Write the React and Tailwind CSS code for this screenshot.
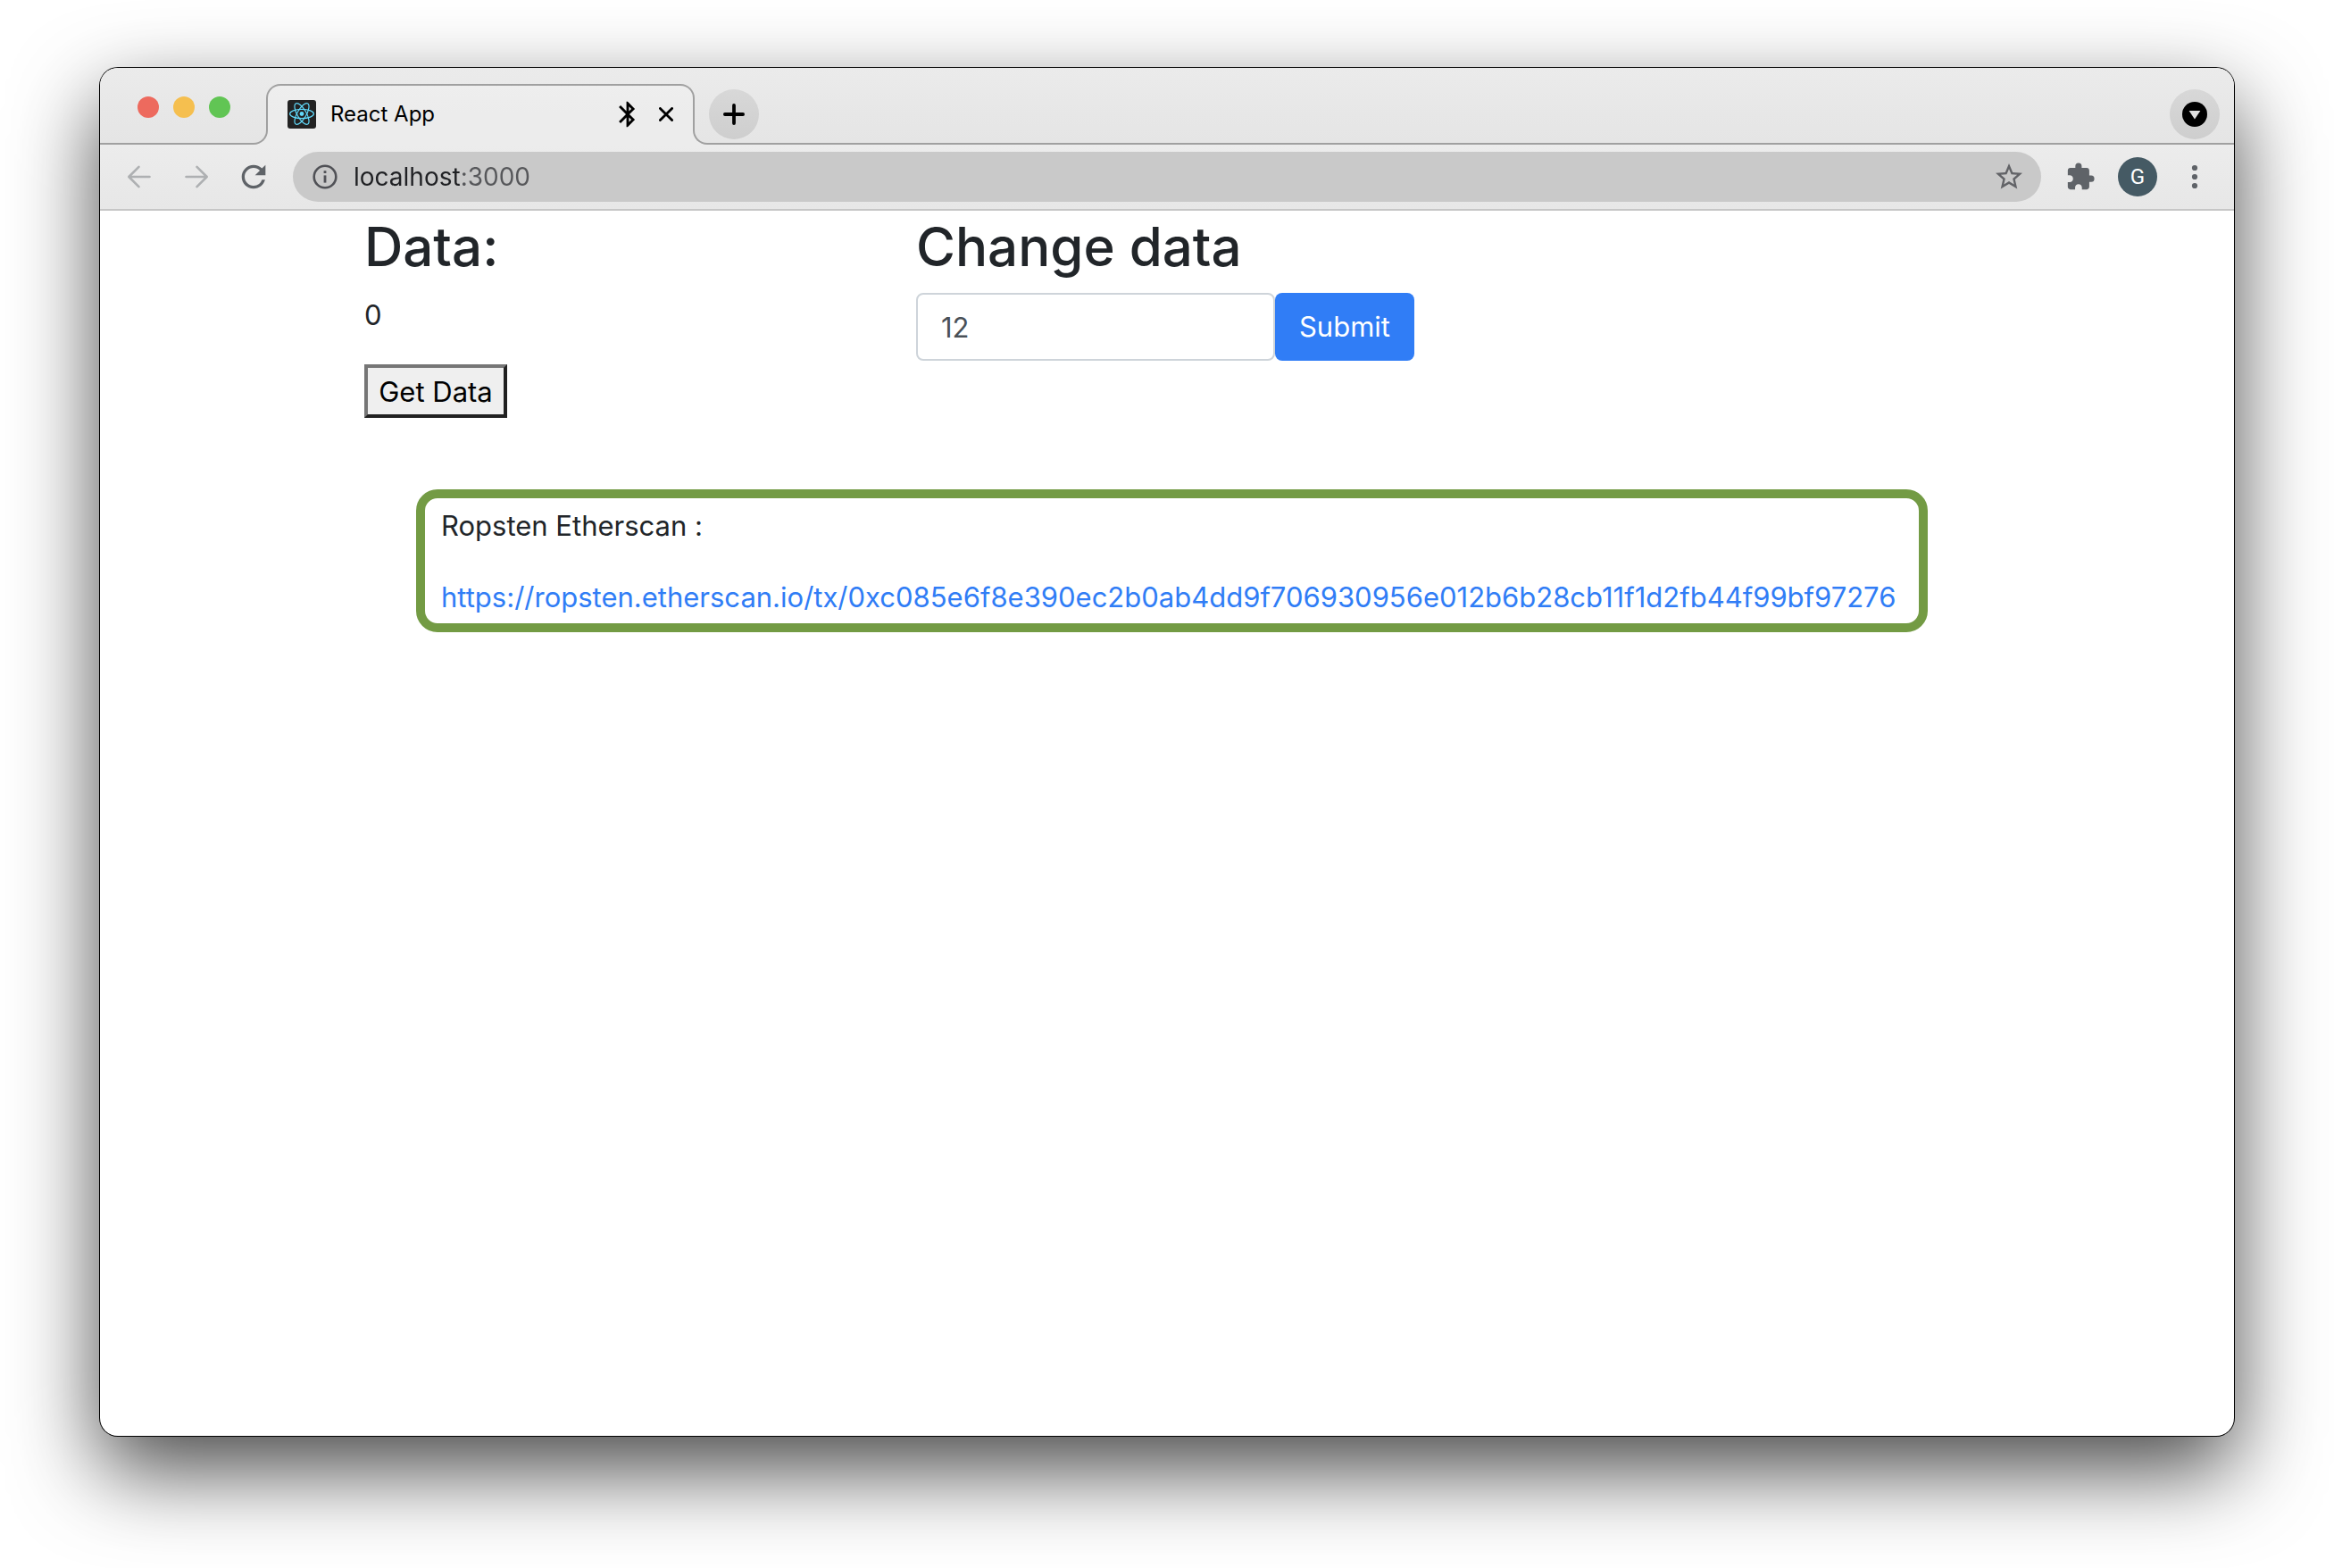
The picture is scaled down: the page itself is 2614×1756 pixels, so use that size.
import { useState } from "react";
import { MdBluetooth, MdExtension, MdRefresh, MdStarBorder } from "react-icons/md";

const TX_URL =
  "https://ropsten.etherscan.io/tx/0xc085e6f8e390ec2b0ab4dd9f706930956e012b6b28cb11f1d2fb44f99bf97276";

function ReactLogo() {
  return (
    <svg viewBox="0 0 32 32" className="size-8 shrink-0" aria-hidden="true">
      <rect width="32" height="32" rx="3" fill="#222222" />
      <g fill="none" stroke="#61dafb" strokeWidth="1.2">
        <ellipse cx="16" cy="15.5" rx="13.4" ry="5.1" />
        <ellipse cx="16" cy="15.5" rx="13.4" ry="5.1" transform="rotate(60 16 15.5)" />
        <ellipse cx="16" cy="15.5" rx="13.4" ry="5.1" transform="rotate(120 16 15.5)" />
      </g>
      <circle cx="16" cy="15.5" r="2.4" fill="#61dafb" />
    </svg>
  );
}

function Arrow({ flip }) {
  return (
    <svg
      viewBox="0 0 28 28"
      className={flip ? "size-7 rotate-180" : "size-7"}
      fill="none"
      stroke="#aeb0b2"
      strokeWidth="2.6"
      strokeLinecap="round"
      strokeLinejoin="round"
      aria-hidden="true"
    >
      <path d="M25.5 14H2.5M13.5 2.8L2.3 14l11.2 11.2" />
    </svg>
  );
}

function InfoIcon() {
  return (
    <svg viewBox="0 0 28 28" className="size-7 shrink-0" aria-hidden="true">
      <circle cx="14" cy="14" r="12.3" fill="none" stroke="#505156" strokeWidth="2.6" />
      <rect x="12.6" y="7.2" width="2.8" height="2.8" fill="#505156" />
      <rect x="12.6" y="12.4" width="2.8" height="8.2" fill="#505156" />
    </svg>
  );
}

function TabStrip() {
  return (
    <header className="grid grid-cols-[188px_476px_1fr] grid-rows-[52px_34px]">
      <div className="col-span-3 col-start-1 row-start-1 bg-linear-to-b from-[#ebebeb] to-[#e7e7e7]" />
      <div className="col-start-1 row-start-2 bg-[#ececec]">
        <div className="h-full rounded-br-[16px] border-r-2 border-b-2 border-[#a0a0a0] bg-linear-to-b from-[#e7e7e7] to-[#e5e5e5]" />
      </div>
      <div className="col-start-2 row-start-2 bg-[#ececec]" />
      <div className="col-start-3 row-start-2 bg-[#ececec]">
        <div className="h-full rounded-bl-[16px] border-b-2 border-l-2 border-[#a0a0a0] bg-linear-to-b from-[#e7e7e7] to-[#e5e5e5]" />
      </div>
      <div className="col-start-2 row-start-1 -mx-0.5 mt-[18px] rounded-t-[16px] border-x-2 border-t-2 border-[#a0a0a0] bg-linear-to-b from-[#eeeeee] to-[#ececec]" />

      <div className="col-start-1 row-span-2 row-start-1 flex gap-4 pt-8 pl-[42px]">
        <button type="button" aria-label="Close window" className="size-6 rounded-full bg-[#ed6a5e]" />
        <button type="button" aria-label="Minimize window" className="size-6 rounded-full bg-[#f5bf4f]" />
        <button type="button" aria-label="Zoom window" className="size-6 rounded-full bg-[#61c554]" />
      </div>

      <div className="col-start-2 row-span-2 row-start-1 flex items-center px-[22px] pt-[18px]">
        <ReactLogo />
        <span className="ml-4 flex-1 text-2xl text-black">React App</span>
        <MdBluetooth className="mr-[18px] size-[34px] text-black" aria-hidden="true" />
        <button type="button" aria-label="Close tab" className="size-4">
          <svg viewBox="0 0 16 16" className="size-4" stroke="#000" strokeWidth="2.8" strokeLinecap="round">
            <path d="M1.4 1.4l13.2 13.2M14.6 1.4L1.4 14.6" />
          </svg>
        </button>
      </div>

      <div className="col-start-3 row-span-2 row-start-1 flex items-center justify-between pt-[18px] pr-4 pl-[18px]">
        <button
          type="button"
          aria-label="New tab"
          className="flex size-14 items-center justify-center rounded-full bg-linear-to-b from-[#d8d8d8] to-[#cecece]"
        >
          <svg viewBox="0 0 24 24" className="size-6" stroke="#000" strokeWidth="3.8" strokeLinecap="round">
            <path d="M12 1.9v20.2M1.9 12h20.2" />
          </svg>
        </button>
        <button
          type="button"
          aria-label="Search tabs"
          className="flex size-14 items-center justify-center rounded-full bg-linear-to-b from-[#d8d8d8] to-[#cecece]"
        >
          <svg viewBox="0 0 28 28" className="size-7">
            <circle cx="14" cy="14" r="14" fill="#000" />
            <path d="M7.6 10h12.8L14 19.6z" fill="#e0e0e0" />
          </svg>
        </button>
      </div>
    </header>
  );
}

function Toolbar() {
  const [address, setAddress] = useState("localhost:3000");
  return (
    <nav className="flex h-[74px] items-center border-b-2 border-[#c6c6c6] bg-linear-to-b from-[#ececec] to-[#e7e7e7] px-3">
      <button type="button" aria-label="Back" className="flex w-16 justify-center">
        <Arrow />
      </button>
      <button type="button" aria-label="Forward" className="flex w-16 justify-center">
        <Arrow flip />
      </button>
      <button type="button" aria-label="Reload" className="flex w-16 justify-center">
        <MdRefresh className="size-10 text-[#5f6368]" />
      </button>
      <div className="mx-3 flex h-14 flex-1 items-center rounded-full bg-[#c9c9c9] pr-[18px] pl-[22px]">
        <InfoIcon />
        <input
          type="text"
          aria-label="Address"
          value={address}
          onChange={(e) => setAddress(e.target.value)}
          className="ml-[18px] min-w-0 flex-1 bg-[linear-gradient(to_right,#202124_121px,#56575a_121px)] bg-clip-text text-[28px] leading-10 text-transparent outline-none"
        />
        <button type="button" aria-label="Bookmark this page">
          <MdStarBorder className="size-9 text-[#626367]" />
        </button>
      </div>
      <button type="button" aria-label="Extensions" className="flex w-16 justify-center">
        <MdExtension className="size-[34px] text-[#5f6368]" />
      </button>
      <button type="button" aria-label="Profile" className="flex w-16 justify-center">
        <span className="flex size-11 items-center justify-center rounded-full bg-[#455a64] font-[Roboto] text-2xl text-white">
          G
        </span>
      </button>
      <button type="button" aria-label="Menu" className="flex w-16 justify-center">
        <svg viewBox="0 0 28 28" className="size-7" fill="#5f6368">
          <circle cx="14" cy="4" r="3.1" />
          <circle cx="14" cy="14" r="3.1" />
          <circle cx="14" cy="24" r="3.1" />
        </svg>
      </button>
    </nav>
  );
}

function Page() {
  const [value, setValue] = useState("12");
  return (
    <main className="mx-auto w-full max-w-[1918px] px-15 text-[31px] leading-[50px] text-[#212529]">
      <div className="flex">
        <section className="w-[618px] shrink-0">
          <h2 className="mb-3 text-[60px] leading-[80px] font-medium">Data:</h2>
          <p className="mb-[30px]">0</p>
          <button
            type="button"
            className="w-40 border-4 border-t-[#767676] border-r-[#212121] border-b-[#212121] border-l-[#767676] bg-[#efefef] pt-0.5 text-center whitespace-nowrap text-black"
          >
            Get Data
          </button>
        </section>
        <section className="flex-1">
          <h2 className="mb-3 text-[60px] leading-[80px] font-medium">Change data</h2>
          <form className="flex" onSubmit={(e) => e.preventDefault()}>
            <input
              type="text"
              aria-label="Change data"
              value={value}
              onChange={(e) => setValue(e.target.value)}
              className="h-[76px] w-[402px] rounded-lg border-2 border-[#ced4da] bg-white px-[26px] text-[#495057] outline-none"
            />
            <button type="submit" className="h-[76px] w-[156px] rounded-lg bg-[#307df6] text-center text-white">
              Submit
            </button>
          </form>
        </section>
      </div>
      <section className="mt-20 mr-[47px] ml-[58px] rounded-[24px] border-10 border-[#739b44] px-[18px] pt-1.5 pb-1">
        <p className="mb-[30px]">Ropsten Etherscan :</p>
        <a href={TX_URL} className="block whitespace-nowrap text-[#307df6]">
          {TX_URL}
        </a>
      </section>
    </main>
  );
}

export default function App() {
  return (
    <div className="flex min-h-screen flex-col bg-white px-28 pt-[76px] pb-[148px] font-[Inter,sans-serif]">
      <div className="flex flex-1 flex-col overflow-hidden rounded-[20px] bg-white shadow-[0_0_0_1px_#000,0_38px_96px_rgba(0,0,0,0.72)]">
        <TabStrip />
        <Toolbar />
        <Page />
      </div>
    </div>
  );
}
